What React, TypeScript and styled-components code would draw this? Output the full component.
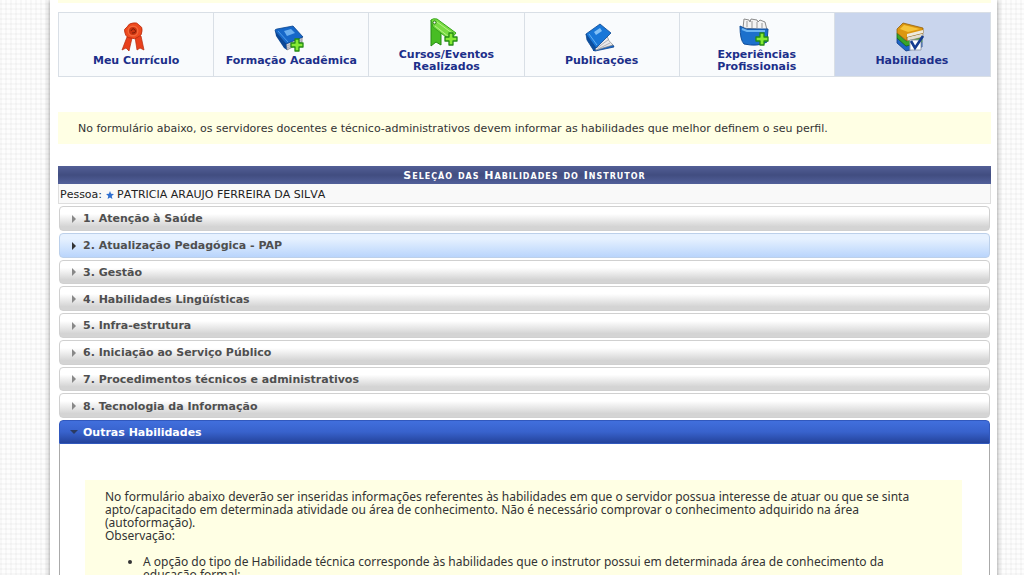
import React from "react";
import styled, { createGlobalStyle, css } from "styled-components";

const GlobalStyle = createGlobalStyle`
  * { box-sizing: border-box; }
  html { height: 100%; overflow: hidden; }
  body {
    margin: 0;
    height: 100%;
    font-family: "DejaVu Sans", Verdana, sans-serif;
    font-size: 11px;
    line-height: 13px;
    color: #333;
    background-color: #fdfdfd;
    background-image:
      repeating-linear-gradient(90deg, rgba(0,0,0,.025) 0 2px, transparent 2px 5px),
      repeating-linear-gradient(0deg, rgba(0,0,0,.025) 0 2px, transparent 2px 5px);
  }
`;

const Frame = styled.div`
  padding: 0 27px 0 50px;
`;

const Page = styled.main`
  min-height: 100vh;
  padding: 0 6px 0 8px;
  background: #fff;
  box-shadow: 0 0 5px rgba(0, 0, 0, 0.45);
`;

const TopStrip = styled.div`
  height: 3px;
  margin-bottom: 9px;
  background: #ffffe4;
`;

const Tabs = styled.nav`
  display: grid;
  grid-template-columns: repeat(6, 1fr);
  border: 1px solid #d9dfe6;
`;

const Tab = styled.a<{ $active?: boolean }>`
  display: flex;
  flex-direction: column;
  align-items: center;
  justify-content: center;
  min-height: 63px;
  color: #1c2f8a;
  background: ${(p) => (p.$active ? "#c9d5ed" : "#f9fbfd")};
  border-right: 1px solid ${(p) => (p.$active ? "#c9d5ed" : "#d9dfe6")};
  font-weight: bold;
  line-height: 12px;
  text-align: center;
  text-decoration: none;
  svg { display: block; width: 32px; height: 32px; overflow: visible; }
`;

const TabText = styled.span`
  max-width: 140px;
`;

const Notice = styled.p`
  margin: 35px 0 22px;
  padding: 10px 20px 9px;
  background: #ffffe4;
`;

const Title = styled.h1`
  margin: 0;
  padding-top: 1px;
  line-height: 17px;
  font-size: 11px;
  font-variant: small-caps;
  letter-spacing: 1px;
  text-align: center;
  color: #fff;
  background: linear-gradient(#535f96, #414d80 50%, #52609a);
`;

const Person = styled.div`
  display: flex;
  align-items: center;
  height: 20px;
  padding: 2px 0 0 1px;
  color: #222;
  background: #f9f9f9;
  border: 1px solid #dedede;
  border-top: 0;
  font-kerning: none;
  svg { margin: 0 3px 0 4px; }
`;

const Sections = styled.div`
  display: grid;
  grid-auto-rows: 1fr;
  gap: 2px;
  min-height: 212px;
  margin: 2px 1px;
`;

const heading = css`
  display: flex;
  align-items: center;
  width: 100%;
  padding: 1px 10px 0;
  font: bold 11px/13px "DejaVu Sans", Verdana, sans-serif;
  text-align: left;
  svg { width: 8px; height: 8px; margin-right: 5px; }
`;

const Section = styled.button<{ $hover?: boolean }>`
  ${heading}
  color: #4f4f4f;
  border: 1px solid ${(p) => (p.$hover ? "#bcd0ea" : "#d0d0d0")};
  border-radius: 4px;
  background: ${(p) =>
    p.$hover
      ? "linear-gradient(#e6f1ff 20%, #b9d5fc)"
      : "linear-gradient(#fff 30%, #d4d4d4 85%)"};
  svg { fill: ${(p) => (p.$hover ? "#333" : "#888")}; }
`;

const OpenHead = styled.button`
  ${heading}
  height: 24px;
  color: #fff;
  border: 1px solid #3158bd;
  border-radius: 4px 4px 0 0;
  background: linear-gradient(#416fdd, #3862cc 50%, #24439b);
  svg { fill: #2b3a60; }
`;

const Open = styled.section`
  margin: 0 1px;
`;

const Panel = styled.div`
  padding: 36px 27px 20px 25px;
  border: 1px solid #aaa;
  border-top: 0;
`;

const Info = styled.div`
  padding: 10px 20px;
  background: #ffffe4;
  font-family: "Noto Sans", Verdana, sans-serif;
  font-size: 12px;
  p { margin: 0; }
  ul { margin: 13px 0; padding: 0 38px; }
`;

const Plus = () => (
  <path d="M20 15h4v4h4v4h-4v4h-4v-4h-4v-4h4z" fill="#86ea35" stroke="#238a14" strokeWidth="1.3" strokeLinejoin="round" />
);

const Ribbon = () => (
  <svg viewBox="3 3 32 32">
    <path d="M10 17L5 30l4-2 3 3 3-13zM18 17l2 13 3-2 4 2-3-14z" fill="#e8401c" stroke="#b52a0c" strokeWidth=".7" />
    <path d="M16 3q4-1 6 2 4 2 3 6 0 5-4 6-3 3-7 1-5 0-6-5-2-4 2-6 2-4 6-4z" fill="#ee4a1f" stroke="#b92a0b" strokeWidth=".8" />
    <circle cx="16" cy="11" r="5.5" fill="#f4683a" />
    <circle cx="16" cy="11" r="4" fill="#cc3310" />
    <path d="M14 11q2-4 4-1t-3 3" fill="none" stroke="#7e1e07" />
  </svg>
);

const BookPlus = () => (
  <svg viewBox="2 0 32 32">
    <path d="M13 20l16-6v5l-15 8z" fill="#cfd0d6" stroke="#6b6b72" strokeWidth=".7" />
    <path d="M14 23l14-6M14 25l14-6" stroke="#9a9aa2" strokeWidth=".6" />
    <path d="M2 8l11 12 1 7-3-2L3 13z" fill="#0c4796" />
    <path d="M2 8q0-2 2-2l16-3 10 11-17 7z" fill="#1667c9" stroke="#0a428d" strokeWidth=".8" />
    <path d="M5 8l10 11" stroke="#4d9be9" />
    <path d="M11 8l7-2 4 4-8 3z" fill="#6aaef0" />
    <g transform="translate(2 1)"><Plus /></g>
  </svg>
);

const TagPlus = () => (
  <svg viewBox="2 1 32 32">
    <path d="M3 4v26l5-4 5 3V9z" fill="#48bd24" stroke="#258b12" />
    <path d="M3 4q2-2 6-1l19 14-6 7L5 11z" fill="#79dc42" stroke="#37a51c" />
    <path d="M9 6l15 11M7 10l14 11" stroke="#b5f286" />
    <circle cx="6.5" cy="6.5" r="1.5" fill="#fff" stroke="#24720f" />
    <g transform="translate(1 2)"><Plus /></g>
  </svg>
);

const OpenBook = () => (
  <svg viewBox="0 0 32 32">
    <path d="M7 27l3-1 17-4 1 2-19 4z" fill="#1768c9" stroke="#0a418c" strokeWidth=".8" />
    <path d="M9 25l12-12q1 5 6 9l-17 5z" fill="#e9e9ec" stroke="#888" strokeWidth=".7" />
    <path d="M11 25l11-8M12 26l12-6" stroke="#a2a2a8" strokeWidth=".8" />
    <path d="M0 11l1 6 7 11 2-4z" fill="#0c4f9f" stroke="#0b4793" strokeWidth=".8" />
    <path d="M0 11L14 1l11 9-15 15z" fill="#1977d8" stroke="#0b4793" strokeWidth=".8" strokeLinejoin="round" />
    <path d="M3 11l8 11" stroke="#64b2f5" />
    <path d="M8 9l6-4 2 3-6 4z" fill="#83c1f7" />
  </svg>
);

const FilesPlus = () => (
  <svg viewBox="3 1 32 32">
    <path d="M5 12l1-9 5 1 1 2 1-3 6 1 1 2 2-2 5 2 2 8z" fill="#f4f4f4" stroke="#8b8b8b" />
    <path d="M9 11V5M14 12V5M19 12V6M24 12V7" stroke="#999" />
    <path d="M2 10l6 3h22l-1 13q-9 5-23 2-4-4-4-18z" fill="#1c70cc" stroke="#104d99" />
    <path d="M4 13l5 2h18" fill="none" stroke="#6eb5f2" strokeWidth="2" />
    <g transform="translate(2 2)"><Plus /></g>
  </svg>
);

const BooksCheck = () => (
  <svg viewBox="0 1 32 32">
    <path d="M1 16l9 8 16-4v5l-16 4-9-8z" fill="#1d66c5" stroke="#0c3985" strokeWidth=".8" />
    <path d="M1 11l9 8 16-4v5l-16 4-9-8z" fill="#38a52b" stroke="#176b17" strokeWidth=".8" />
    <path d="M10 15l17-4v4l-16 4z" fill="#e2dfd2" stroke="#8b7a51" strokeWidth=".6" />
    <path d="M1 7l6-6 20 5v5l-16 4v4l-10-8z" fill="#dc970f" stroke="#94600b" strokeWidth=".8" />
    <path d="M4 7l4-4 16 4-12 3z" fill="#f6c43a" />
    <path d="M11 12l16-4v3l-16 4z" fill="#eeeade" />
    <path d="M14 18h11v10H14z" fill="#fff" stroke="#9aa2b2" />
    <path d="M15 19l4 7 8-12" fill="none" stroke="#153b91" strokeWidth="2.6" />
  </svg>
);

const Right = () => (
  <svg viewBox="0 0 8 8" aria-hidden="true"><path d="M2 0l4 4-4 4z" /></svg>
);

const Down = () => (
  <svg viewBox="0 0 8 8" aria-hidden="true"><path d="M0 1h8L4 5z" /></svg>
);

const Star = () => (
  <svg width="8" height="8" viewBox="0 0 10 10" aria-hidden="true">
    <path d="M5 0l1.4 3.5L10 3.8 7.2 6.2 8 10 5 8 2 10l.8-3.8L0 3.8l3.6-.3z" fill="#2f6fd0" />
  </svg>
);

const tabs = [
  { text: "Meu Currículo", Icon: Ribbon },
  { text: "Formação Acadêmica", Icon: BookPlus },
  { text: "Cursos/Eventos Realizados", Icon: TagPlus },
  { text: "Publicações", Icon: OpenBook },
  { text: "Experiências Profissionais", Icon: FilesPlus },
  { text: "Habilidades", Icon: BooksCheck, active: true },
];

const sections = [
  "1. Atenção à Saúde",
  "2. Atualização Pedagógica - PAP",
  "3. Gestão",
  "4. Habilidades Lingüísticas",
  "5. Infra-estrutura",
  "6. Iniciação ao Serviço Público",
  "7. Procedimentos técnicos e administrativos",
  "8. Tecnologia da Informação",
];

export default function App() {
  return (
    <Frame>
      <GlobalStyle />
      <Page>
        <TopStrip />
        <Tabs>
          {tabs.map(({ text, Icon, active }) => (
            <Tab key={text} href="#" $active={active}>
              <Icon />
              <TabText>{text}</TabText>
            </Tab>
          ))}
        </Tabs>
        <Notice>
          No formulário abaixo, os servidores docentes e técnico-administrativos devem informar as
          habilidades que melhor definem o seu perfil.
        </Notice>
        <Title>Seleção das Habilidades do Instrutor</Title>
        <Person>
          Pessoa: <Star /> PATRICIA ARAUJO FERREIRA DA SILVA
        </Person>
        <Sections>
          {sections.map((name, i) => (
            <Section key={name} type="button" $hover={i === 1}>
              <Right />
              {name}
            </Section>
          ))}
        </Sections>
        <Open>
          <OpenHead type="button" aria-expanded="true">
            <Down />
            Outras Habilidades
          </OpenHead>
          <Panel>
            <Info>
              <p>
                No formulário abaixo deverão ser inseridas informações referentes às habilidades em
                que o servidor possua interesse de atuar ou que se sinta apto/capacitado em
                determinada atividade ou área de conhecimento. Não é necessário comprovar o
                conhecimento adquirido na área (autoformação).
              </p>
              <p>Observação:</p>
              <ul>
                <li>
                  A opção do tipo de Habilidade técnica corresponde às habilidades que o instrutor
                  possui em determinada área de conhecimento da educação formal;
                </li>
              </ul>
            </Info>
          </Panel>
        </Open>
      </Page>
    </Frame>
  );
}
